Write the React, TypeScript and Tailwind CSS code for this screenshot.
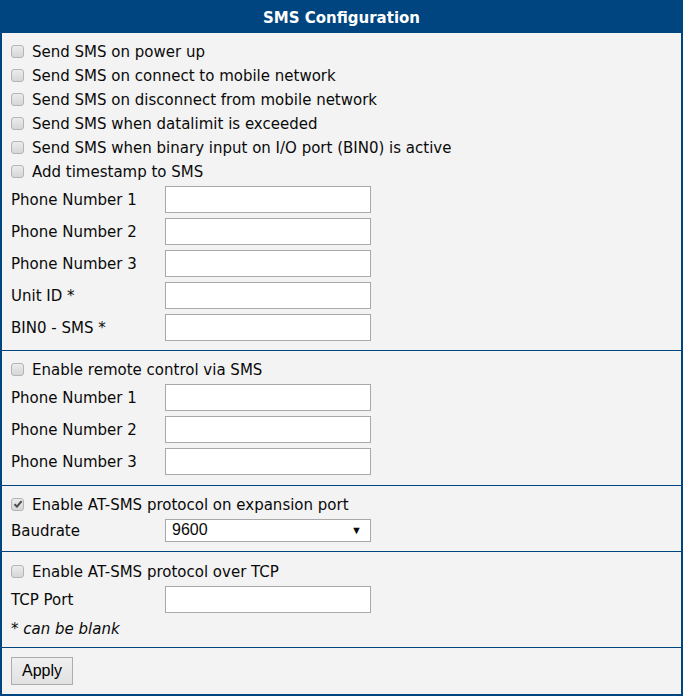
import { useState } from 'react';

const font = { fontFamily: '"DejaVu Sans", Verdana, sans-serif' };
const arial = { fontFamily: '"Liberation Sans", Arial, sans-serif' };

function Check({ label, checked = false }: { label: string; checked?: boolean }) {
    const [on, setOn] = useState<boolean>(checked);
    return (
        <label className="flex items-center h-[24px] cursor-pointer select-none" onClick={() => setOn(!on)}>
            <span className="w-[13px] h-[13px] rounded-[3px] border border-[#b4b4b4] bg-gradient-to-b from-[#ececec] to-[#d6d6d6] flex items-center justify-center mr-[8px]">
                {on && (
                    <svg width="10" height="10" viewBox="0 0 10 10">
                        <path d="M1.5 5.2 L4 7.6 L8.6 2.2" stroke="#4a4a4a" strokeWidth="2" fill="none" />
                    </svg>
                )}
            </span>
            <span className="pt-[3px]">{label}</span>
        </label>
    );
}

function Field({ label }: { label: string }) {
    return (
        <div className="flex items-center h-[32px]">
            <span className="w-[154px] pt-[3px]">{label}</span>
            <input className="w-[206px] h-[27px] border border-[#a9a9a9] bg-white outline-none px-1" />
        </div>
    );
}

export default function App() {
    return (
        <div className="w-[683px] h-[696px] bg-[#f3f3f3] border-x-2 border-b-2 border-[#00457f] text-[15px] text-[#0a0a0a]" style={font}>
            <div className="h-[33px] pt-[3px] bg-[#00457f] text-white font-bold flex items-center justify-center">
                SMS Configuration
            </div>

            <div className="px-[9px] pt-[6px] pb-[7px] border-b border-[#00457f]">
                <Check label="Send SMS on power up" />
                <Check label="Send SMS on connect to mobile network" />
                <Check label="Send SMS on disconnect from mobile network" />
                <Check label="Send SMS when datalimit is exceeded" />
                <Check label="Send SMS when binary input on I/O port (BIN0) is active" />
                <Check label="Add timestamp to SMS" />
                <Field label="Phone Number 1" />
                <Field label="Phone Number 2" />
                <Field label="Phone Number 3" />
                <Field label="Unit ID *" />
                <Field label="BIN0 - SMS *" />
            </div>

            <div className="px-[9px] pt-[6px] pb-[8px] border-b border-[#00457f]">
                <Check label="Enable remote control via SMS" />
                <Field label="Phone Number 1" />
                <Field label="Phone Number 2" />
                <Field label="Phone Number 3" />
            </div>

            <div className="px-[9px] pt-[6px] pb-[7px] border-b border-[#00457f]">
                <Check label="Enable AT-SMS protocol on expansion port" checked />
                <div className="flex items-center h-[28px]">
                    <span className="w-[154px] pt-[3px]">Baudrate</span>
                    <div className="w-[206px] h-[23px] border border-[#a9a9a9] bg-white flex items-center justify-between pl-[6px] pr-[8px] text-[16px]" style={arial}>
                        <span>9600</span>
                        <span className="text-[11px]">▼</span>
                    </div>
                </div>
            </div>

            <div className="px-[9px] pt-[7px] pb-[6px] border-b border-[#00457f]">
                <Check label="Enable AT-SMS protocol over TCP" />
                <Field label="TCP Port" />
                <div className="h-[26px] pt-[3px] flex items-center italic">* can be blank</div>
            </div>

            <div className="px-[9px] pt-[9px]">
                <button className="h-[28px] px-[10px] border border-[#adadad] bg-gradient-to-b from-[#f0f0f0] to-[#e1e1e1] text-[16px] text-black" style={arial}>
                    Apply
                </button>
            </div>
        </div>
    );
}
